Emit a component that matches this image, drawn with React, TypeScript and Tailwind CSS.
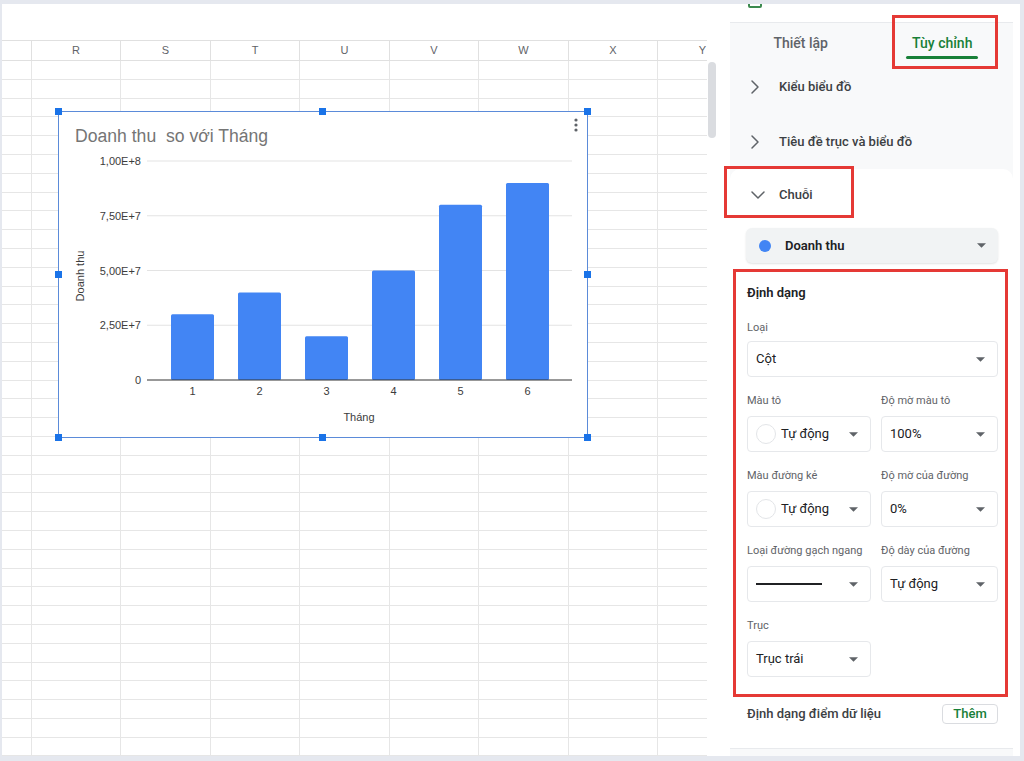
import { ChevronRight, ChevronDown } from 'lucide-react'

// ── spreadsheet grid ────────────────────────────────────────────────
const COLS: { name: string; w: string }[] = [
  { name: 'R', w: 'w-[89px]' },
  { name: 'S', w: 'w-[90px]' },
  { name: 'T', w: 'w-[89px]' },
  { name: 'U', w: 'w-[90px]' },
  { name: 'V', w: 'w-[89px]' },
  { name: 'W', w: 'w-[90px]' },
  { name: 'X', w: 'w-[89px]' },
  { name: 'Y', w: 'w-[90px]' },
]
const ROWS = Array.from({ length: 37 }, (_, i) => i)

const BARS = [
  { label: '1', value: 3e7 },
  { label: '2', value: 4e7 },
  { label: '3', value: 2e7 },
  { label: '4', value: 5e7 },
  { label: '5', value: 8e7 },
  { label: '6', value: 9e7 },
]
const TICKS = ['1,00E+8', '7,50E+7', '5,00E+7', '2,50E+7', '0']

function Chart() {
  const base = 268
  const span = 219
  return (
    <div className="absolute left-[56px] top-[107px] h-[327px] w-[530px] border border-[#5b8bd9] bg-white">
      <svg width="528" height="325" className="block font-['Liberation_Sans',Arial,sans-serif]">
        <text x="16" y="30" fontSize="17.6" fill="#757575">Doanh thu{'\u00a0'} so với Tháng</text>
        <circle cx="517" cy="8" r="1.6" fill="#5f6368" />
        <circle cx="517" cy="13" r="1.6" fill="#5f6368" />
        <circle cx="517" cy="18" r="1.6" fill="#5f6368" />
        {TICKS.map((t, i) => {
          const y = base - span + i * (span / 4)
          return (
            <g key={t}>
              {i < 4 && <line x1="88" x2="513" y1={y} y2={y} stroke="#e3e3e3" strokeWidth="1" />}
              <text x="82" y={y + 4} fontSize="11" fill="#3c3c3c" textAnchor="end">{t}</text>
            </g>
          )
        })}
        {BARS.map((b, i) => {
          const h = (b.value / 1e8) * span
          const x = 112 + i * 67
          return (
            <g key={b.label}>
              <rect x={x} y={base - h} width="43" height={h} rx="1.5" fill="#4285f4" />
              <text x={x + 21.5} y={base + 15} fontSize="11" fill="#3c3c3c" textAnchor="middle">{b.label}</text>
            </g>
          )
        })}
        <line x1="88" x2="513" y1={base} y2={base} stroke="#333" strokeWidth="1" />
        <text x="300" y="309" fontSize="11" fill="#3c3c3c" textAnchor="middle">Tháng</text>
        <text x="0" y="0" fontSize="11" fill="#3c3c3c" textAnchor="middle" transform="translate(25 164) rotate(-90)">Doanh thu</text>
      </svg>
      {/* selection handles */}
      <div className="absolute -left-[4px] -top-[4px] h-[7px] w-[7px] bg-[#1a73e8]" />
      <div className="absolute left-[260px] -top-[4px] h-[7px] w-[7px] bg-[#1a73e8]" />
      <div className="absolute -right-[4px] -top-[4px] h-[7px] w-[7px] bg-[#1a73e8]" />
      <div className="absolute -left-[4px] top-[159px] h-[7px] w-[7px] bg-[#1a73e8]" />
      <div className="absolute -right-[4px] top-[159px] h-[7px] w-[7px] bg-[#1a73e8]" />
      <div className="absolute -left-[4px] -bottom-[4px] h-[7px] w-[7px] bg-[#1a73e8]" />
      <div className="absolute left-[260px] -bottom-[4px] h-[7px] w-[7px] bg-[#1a73e8]" />
      <div className="absolute -right-[4px] -bottom-[4px] h-[7px] w-[7px] bg-[#1a73e8]" />
    </div>
  )
}

function Sheet() {
  return (
    <div className="relative w-[705px] shrink-0 overflow-hidden bg-white font-['Liberation_Sans',Arial,sans-serif]">
      <div className="h-[36px]" />
      <div className="flex h-[21px] border-y border-[#e0e0e0]">
        <div className="w-[30px] shrink-0 border-r border-[#e0e0e0]" />
        {COLS.map(c => (
          <div key={c.name} className={`${c.w} shrink-0 border-r border-[#e0e0e0] text-center text-[11px] leading-[19px] text-[#5f6368]`}>
            {c.name}
          </div>
        ))}
      </div>
      {ROWS.map(r => (
        <div key={r} className="flex h-[18.8px] border-b border-[#e6e6e6]">
          <div className="w-[30px] shrink-0 border-r border-[#e6e6e6]" />
          {COLS.map(c => (
            <div key={c.name} className={`${c.w} shrink-0 border-r border-[#e6e6e6]`} />
          ))}
        </div>
      ))}
      <Chart />
    </div>
  )
}

// ── side panel ──────────────────────────────────────────────────────
function Caret() {
  return (
    <svg width="9" height="5" viewBox="0 0 10 5" className="shrink-0">
      <path d="M0 0h10L5 5z" fill="#5f6368" />
    </svg>
  )
}

function Select({ children }: { children: React.ReactNode }) {
  return (
    <div className="flex h-[36px] items-center rounded-[4px] border border-[#e6e8eb] bg-white pl-[8px] pr-[12px]">
      <div className="flex flex-1 items-center text-[13px] text-[#202124]">{children}</div>
      <Caret />
    </div>
  )
}

function Swatch() {
  return <span className="mr-[5px] h-[20px] w-[20px] rounded-full border border-[#e3e5e8] bg-white" />
}

function Field({ label, children }: { label: string; children: React.ReactNode }) {
  return (
    <div>
      <div className="mt-[17px] text-[11px] leading-[14px] text-[#5f6368]">{label}</div>
      <div className="mt-[8px]">{children}</div>
    </div>
  )
}

function Panel() {
  return (
    <div className="flex w-[300px] shrink-0 flex-col bg-white pl-[10px] pr-[7px] font-['Roboto',sans-serif]">
      <div className="h-[19px] overflow-hidden border-b border-[#e8eaed] pl-[18px]">
        <div className="-mt-[10px] h-[14px] w-[14px] rounded-[2px] border-2 border-[#3c8a4f]" />
      </div>

      <div className="flex bg-[#f8f9fa]">
        <div className="flex flex-1 flex-col items-center">
          <div className="mt-[10px] text-[14px] font-medium leading-[20px] text-[#5f6368]">Thiết lập</div>
          <div className="mt-[3px] h-[3px] w-[72px]" />
        </div>
        <div className="flex flex-1 flex-col items-center">
          <div className="mt-[10px] text-[14px] font-medium leading-[20px] text-[#188038]">Tùy chỉnh</div>
          <div className="mt-[3px] h-[3px] w-[72px] rounded-full bg-[#188038]" />
        </div>
      </div>

      <div className="flex h-[55px] items-center gap-[12px] bg-[#f8f9fa] pl-[13px] text-[13px] font-medium text-[#3c4043]">
        <ChevronRight size={24} strokeWidth={1.5} color="#5f6368" />
        <span>Kiểu biểu đồ</span>
      </div>
      <div className="flex h-[55px] items-center gap-[12px] bg-[#f8f9fa] pl-[13px] text-[13px] font-medium text-[#3c4043]">
        <ChevronRight size={24} strokeWidth={1.5} color="#5f6368" />
        <span>Tiêu đề trục và biểu đồ</span>
      </div>

      <div className="flex-1 bg-[#f8f9fa]">
        <div className="rounded-t-[10px] border-b border-[#e8eaed] bg-white pl-[16px] pr-[15px] pb-[24px]">
          <div className="flex h-[52px] items-center gap-[9px] text-[13px] font-medium text-[#3c4043]">
            <ChevronDown size={24} strokeWidth={1.5} color="#5f6368" />
            <span>Chuỗi</span>
          </div>

          <div className="mt-[7px] flex h-[35px] items-center rounded-[6px] bg-[#f1f3f4] pl-[13px] pr-[12px] shadow-[0_1px_2px_rgba(60,64,67,0.15)]">
            <span className="h-[12px] w-[12px] rounded-full bg-[#4285f4]" />
            <span className="ml-[14px] flex-1 text-[13px] font-semibold text-[#202124]">Doanh thu</span>
            <Caret />
          </div>

          <div className="pl-[1px]">
            <div className="mt-[22px] text-[13px] font-semibold leading-[16px] text-[#202124]">Định dạng</div>

            <div className="mt-[20px] text-[11px] leading-[14px] text-[#5f6368]">Loại</div>
            <div className="mt-[6px]">
              <Select>Cột</Select>
            </div>

            <div className="grid grid-cols-[124px_117px] gap-x-[10px]">
              <Field label="Màu tô">
                <Select><Swatch />Tự động</Select>
              </Field>
              <Field label="Độ mờ màu tô">
                <Select>100%</Select>
              </Field>
              <Field label="Màu đường kẻ">
                <Select><Swatch />Tự động</Select>
              </Field>
              <Field label="Độ mờ của đường">
                <Select>0%</Select>
              </Field>
              <Field label="Loại đường gạch ngang">
                <Select><span className="h-[1.5px] w-[66px] bg-[#202124]" /></Select>
              </Field>
              <Field label="Độ dày của đường">
                <Select>Tự động</Select>
              </Field>
              <Field label="Trục">
                <Select>Trục trái</Select>
              </Field>
            </div>

            <div className="mt-[27px] flex h-[20px] items-center justify-between">
              <span className="text-[13px] font-medium text-[#3c4043]">Định dạng điểm dữ liệu</span>
              <span className="flex h-[20px] w-[56px] items-center justify-center rounded-[4px] border border-[#dadce0] text-[13px] font-medium text-[#188038]">
                Thêm
              </span>
            </div>
          </div>
        </div>
      </div>
    </div>
  )
}

export default function App() {
  return (
    <div className="relative flex h-[761px] w-[1024px] overflow-hidden bg-[#e5e8ef] pb-[5px] pl-[2px] pr-[4px] pt-[4px]">
      <Sheet />
      <div className="w-[13px] shrink-0 bg-white pl-[1px] pt-[58px]">
        <div className="h-[76px] w-[8px] rounded-full bg-[#dadce0]" />
      </div>
      <Panel />

      {/* annotation boxes */}
      <div className="pointer-events-none absolute left-[892px] top-[15px] h-[54px] w-[106px] border-[3px] border-[#e53935]" />
      <div className="pointer-events-none absolute left-[724px] top-[166px] h-[52px] w-[130px] border-[3px] border-[#e53935]" />
      <div className="pointer-events-none absolute left-[733px] top-[269px] h-[428px] w-[275px] border-[3px] border-[#e53935]" />
    </div>
  )
}
